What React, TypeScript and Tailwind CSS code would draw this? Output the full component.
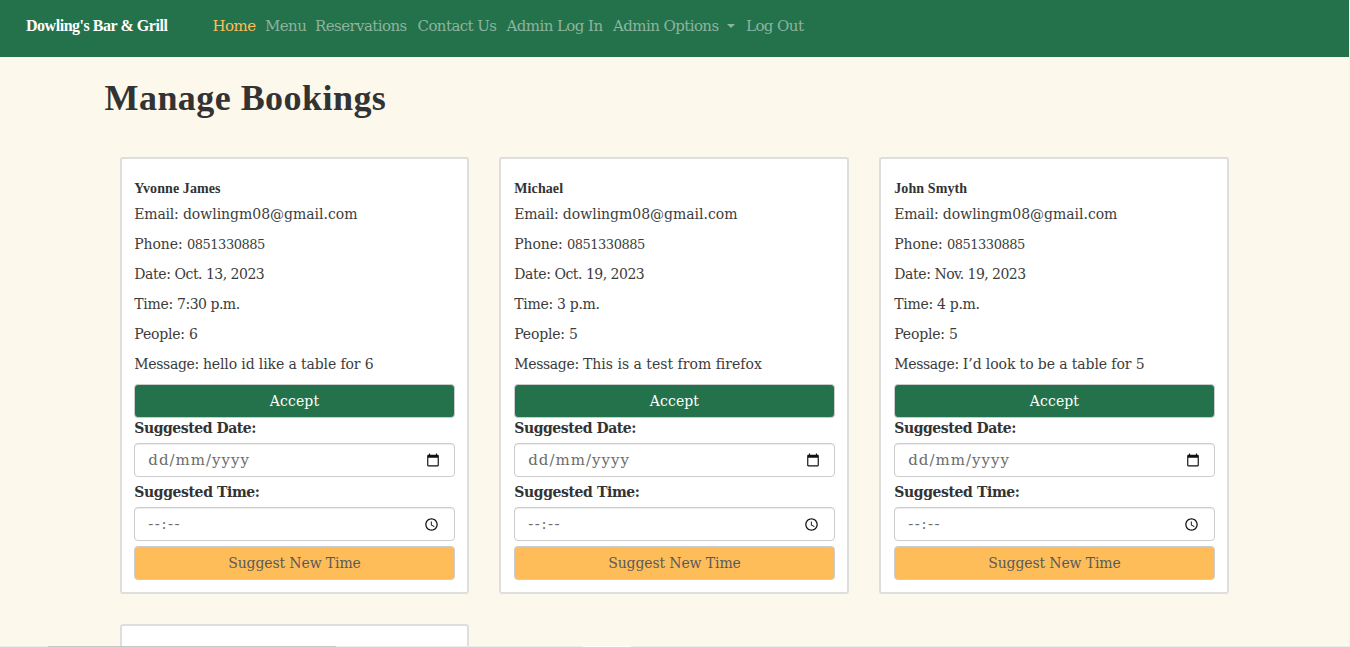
import React from "react";

type Field = { label: string; value: string; spacing: string };
type Booking = { name: string; fields: Field[] };

const labelSpacing: Record<string, string> = {
  Email: "tracking-[-0.2px]",
  Phone: "tracking-[-0.1px]",
  Date: "tracking-[-0.4px]",
  Time: "tracking-[-0.3px]",
  People: "tracking-[-0.2px]",
  Message: "tracking-[-0.35px]",
};

const bookings: Booking[] = [
  {
    name: "Yvonne James",
    fields: [
      { label: "Email", value: "dowlingm08@gmail.com", spacing: "tracking-[-0.02px]" },
      { label: "Phone", value: "0851330885", spacing: "text-[13px] tracking-[-0.48px]" },
      { label: "Date", value: "Oct. 13, 2023", spacing: "tracking-[-0.5px]" },
      { label: "Time", value: "7:30 p.m.", spacing: "tracking-[-0.5px]" },
      { label: "People", value: "6", spacing: "tracking-[-0.1px]" },
      { label: "Message", value: "hello id like a table for 6", spacing: "tracking-[-0.12px]" },
    ],
  },
  {
    name: "Michael",
    fields: [
      { label: "Email", value: "dowlingm08@gmail.com", spacing: "tracking-[-0.02px]" },
      { label: "Phone", value: "0851330885", spacing: "text-[13px] tracking-[-0.48px]" },
      { label: "Date", value: "Oct. 19, 2023", spacing: "tracking-[-0.5px]" },
      { label: "Time", value: "3 p.m.", spacing: "tracking-[-0.3px]" },
      { label: "People", value: "5", spacing: "tracking-[-0.1px]" },
      { label: "Message", value: "This is a test from firefox", spacing: "tracking-[0.01px]" },
    ],
  },
  {
    name: "John Smyth",
    fields: [
      { label: "Email", value: "dowlingm08@gmail.com", spacing: "tracking-[-0.02px]" },
      { label: "Phone", value: "0851330885", spacing: "text-[13px] tracking-[-0.48px]" },
      { label: "Date", value: "Nov. 19, 2023", spacing: "tracking-[-0.55px]" },
      { label: "Time", value: "4 p.m.", spacing: "tracking-[-0.3px]" },
      { label: "People", value: "5", spacing: "tracking-[-0.1px]" },
      { label: "Message", value: "I’d look to be a table for 5", spacing: "tracking-[-0.1px]" },
    ],
  },
];

const links = [
  { text: "Home", width: "w-[42.5px]", active: true },
  { text: "Menu", width: "w-[40px]" },
  { text: "Reservations", width: "w-[92.5px]" },
  { text: "Contact Us", width: "w-[79px]" },
  { text: "Admin Log In", width: "w-[96.5px]" },
  { text: "Admin Options", width: "w-[123px]", caret: true },
  { text: "Log Out", width: "w-[57px]" },
];

function CalendarIcon() {
  return (
    <svg width="14" height="14" viewBox="0 0 24 24" fill="#111">
      <path d="M20 3h-1V1h-2v2H7V1H5v2H4c-1.1 0-2 .9-2 2v16c0 1.1.9 2 2 2h16c1.1 0 2-.9 2-2V5c0-1.100-.9-2-2-2zm0 18H4V8h16v13z" />
    </svg>
  );
}

function ClockIcon() {
  return (
    <svg width="15" height="15" viewBox="0 0 24 24" fill="#111">
      <path d="M11.990 2C6.470 2 2 6.480 2 12s4.470 10 9.990 10C17.520 22 22 17.520 22 12S17.520 2 11.990 2zM12 20c-4.420 0-8-3.580-8-8s3.580-8 8-8 8 3.580 8 8-3.580 8-8 8zm.5-13H11v6l5.250 3.150.75-1.230-4.500-2.670z" />
    </svg>
  );
}

function BookingCard({ booking }: { booking: Booking }) {
  return (
    <div className="h-[437px] rounded-[3px] border-2 border-[#dedede] bg-white px-[12.8px] pt-[19px]">
      <h5 className="h-[21px] whitespace-nowrap font-['Liberation_Serif',serif] text-[14px] leading-[21px] font-bold tracking-[0.1px]">
        {booking.name}
      </h5>
      {booking.fields.map((f) => (
        <p key={f.label} className={`h-[30px] whitespace-nowrap text-[14px] leading-[30px] text-[#3c3c3c] ${labelSpacing[f.label]}`}>
          {f.label}: <span className={f.spacing}>{f.value}</span>
        </p>
      ))}
      <button className="mt-[5px] block h-[34px] w-full rounded-[4px] border border-[#ccc] bg-[#24724b] text-[14px] leading-[31px] tracking-[0.1px] text-white">
        Accept
      </button>
      <p className="h-[25px] whitespace-nowrap text-[14px] leading-[20px] font-bold tracking-[-0.45px]">Suggested Date:</p>
      <div className="flex h-[34px] items-center justify-between rounded-[4px] border border-[#ccc] pr-[14px] pl-[13px] text-[#6c6c6c] shadow-[inset_0_1px_1px_rgba(0,0,0,0.075)]">
        <span className="text-[15px] leading-[32px] tracking-[1px]">dd/mm/yyyy</span>
        <CalendarIcon />
      </div>
      <p className="h-[30px] whitespace-nowrap text-[14px] leading-[30px] font-bold tracking-[-0.4px]">Suggested Time:</p>
      <div className="flex h-[34px] items-center justify-between rounded-[4px] border border-[#ccc] pr-[15px] pl-[13px] text-[#6c6c6c] shadow-[inset_0_1px_1px_rgba(0,0,0,0.075)]">
        <span className="text-[15px] leading-[32px] tracking-[1.5px]">--:--</span>
        <ClockIcon />
      </div>
      <button className="mt-[5px] block h-[34px] w-full rounded-[4px] border border-[#ccc] bg-[#ffbd59] text-[14px] leading-[31px] tracking-[-0.12px] text-[#5a5a5a]">
        Suggest New Time
      </button>
    </div>
  );
}

export default function App() {
  return (
    <div className="relative h-[647px] w-[1350px] overflow-hidden bg-[#f4f4f0] pr-px font-['DejaVu_Serif',serif] text-[#333]">
      <div className="h-full bg-[#fcf8eb]">
        <nav className="flex h-[57px] bg-[#24724b] pl-[26px] leading-[52px]">
          <span className="w-[186.500px] whitespace-nowrap font-['Liberation_Serif',serif] text-[16px] font-bold tracking-[-0.47px] text-white">
            Dowling's Bar &amp; Grill
          </span>
          <div className="flex gap-[10px] text-[15px] tracking-[-0.57px]">
            {links.map((l) => (
              <a key={l.text} className={`flex items-center self-start whitespace-nowrap ${l.width} ${l.active ? "text-[#ffbd59]" : "text-[#8cb49f]"}`}>
                {l.text}
                {l.caret && <span className="-mt-px mr-px ml-auto border-x-4 border-t-4 border-x-transparent border-t-[#8cb49f]" />}
              </a>
            ))}
          </div>
        </nav>
        <main className="mx-auto w-[1140px]">
          <h1 className="h-[100px] pt-4 font-['Liberation_Serif',serif] text-[36px] leading-[50px] font-bold tracking-[0.45px]">
            Manage Bookings
          </h1>
          <div className="ml-[15px] grid w-[1109.95px] grid-cols-3 gap-[30px]">
            {bookings.map((b) => (
              <BookingCard key={b.name} booking={b} />
            ))}
            <div className="h-[60px] rounded-[3px] border-2 border-[#dedede] bg-white" />
          </div>
        </main>
      </div>
      <div className="absolute bottom-0 left-0 flex h-px w-full bg-[#ececec]">
        <div className="ml-[48px] w-[288px] bg-[#c8c8c8]" />
        <div className="ml-[247px] w-[48px] bg-white" />
      </div>
    </div>
  );
}
